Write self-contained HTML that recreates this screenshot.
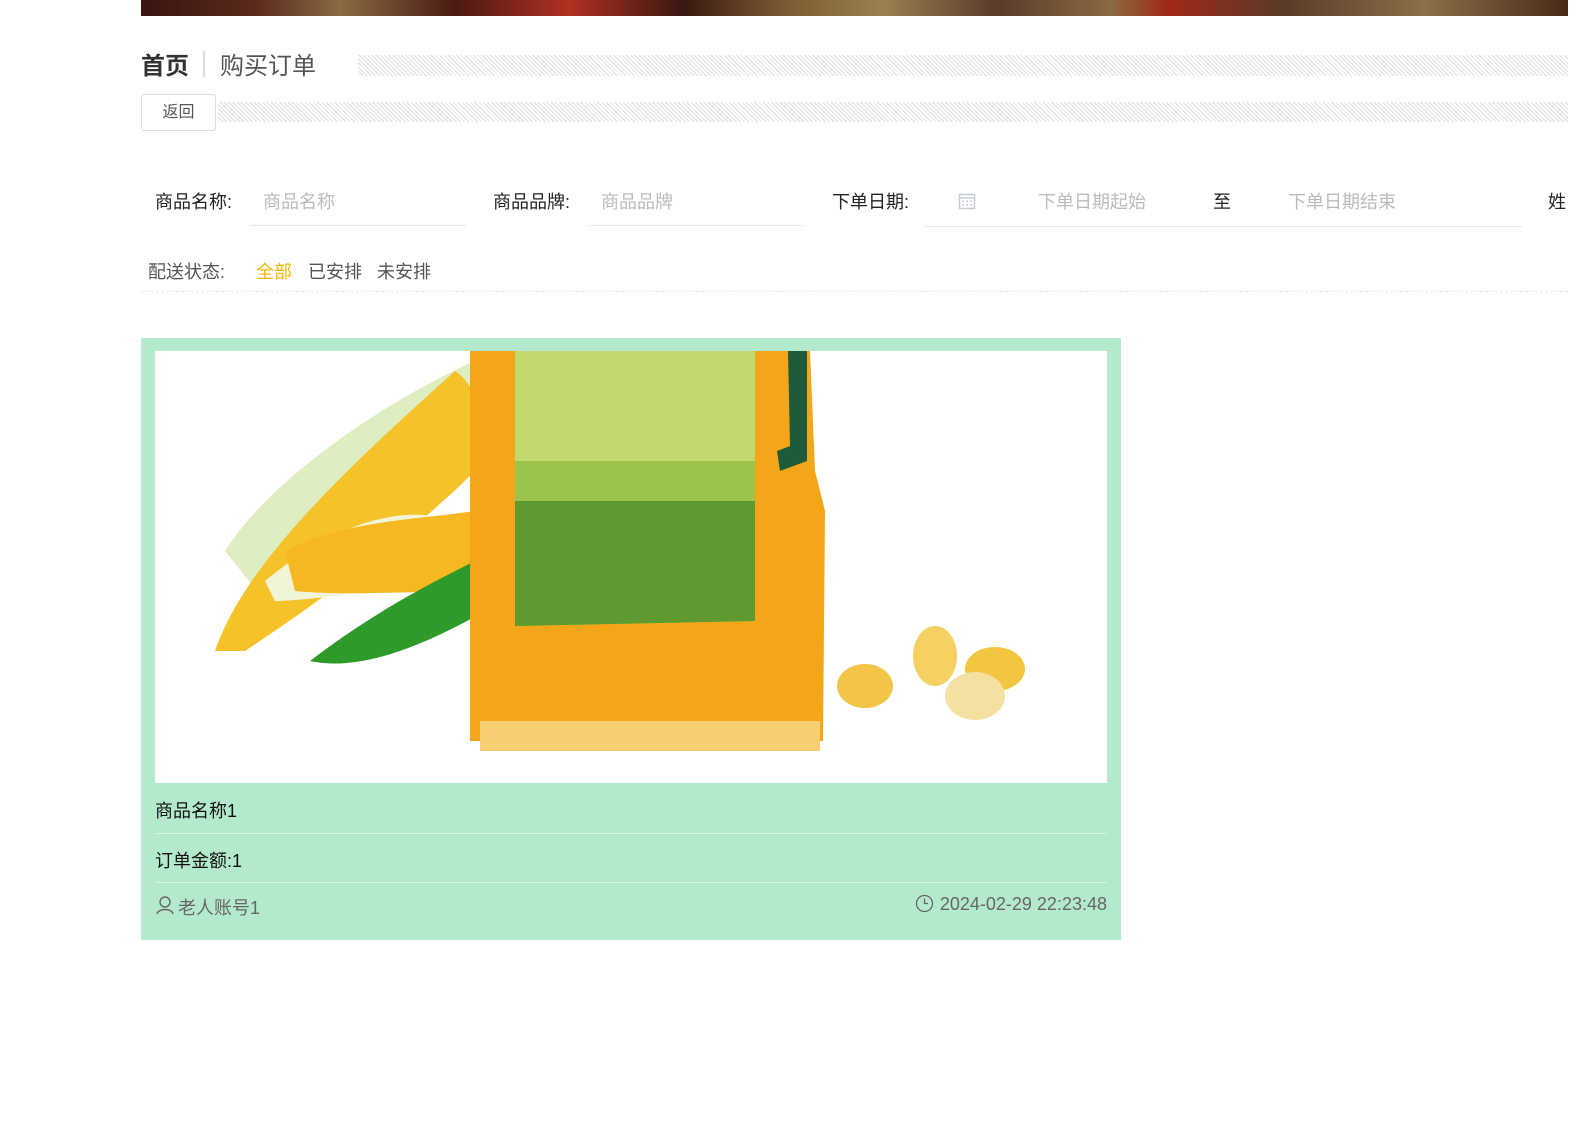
<!DOCTYPE html>
<html><head><meta charset="utf-8"><style>
*{margin:0;padding:0;box-sizing:border-box}
body{width:1592px;height:1128px;background:#fff;font-family:"Liberation Sans","Noto Sans CJK SC",sans-serif;position:relative;overflow:hidden}
.abs{position:absolute}
.banner{left:141px;top:0;width:1427px;height:16px;background:linear-gradient(90deg,#3a1410 0%,#5a2a1c 8%,#8a6a40 14%,#4a1a14 22%,#b03020 30%,#3a1812 38%,#7a5a30 45%,#9a8050 52%,#5a3a2a 60%,#8a6a40 68%,#a02818 72%,#5a3a28 80%,#8a7048 90%,#4a2818 100%)}
.hatch{background:repeating-linear-gradient(45deg,#ddd 0 1px,#fff 1px 3px)}
.lbl{font-size:18px;color:#222}
.ph{font-size:18px;color:#bbb}
.uline{height:1px;background:#e8e8e8}
</style></head><body>
<div class="abs banner"></div>
<div class="abs" style="left:141px;top:46px;font-size:24px;font-weight:bold;color:#333">首页</div>
<div class="abs" style="left:203px;top:51px;width:2px;height:26px;background:#ddd"></div>
<div class="abs" style="left:220px;top:46px;font-size:24px;color:#555">购买订单</div>
<div class="abs hatch" style="left:358px;top:55px;width:1210px;height:21px"></div>
<div class="abs" style="left:141px;top:94px;width:75px;height:37px;border:1px solid #ddd;border-radius:3px;font-size:16px;color:#555;text-align:center;line-height:35px">返回</div>
<div class="abs hatch" style="left:218px;top:102px;width:1350px;height:20px"></div>

<div class="abs lbl" style="left:155px;top:188px">商品名称:</div>
<div class="abs ph" style="left:263px;top:188px">商品名称</div>
<div class="abs uline" style="left:250px;top:225px;width:216px"></div>
<div class="abs lbl" style="left:493px;top:188px">商品品牌:</div>
<div class="abs ph" style="left:601px;top:188px">商品品牌</div>
<div class="abs uline" style="left:588px;top:225px;width:216px"></div>
<div class="abs lbl" style="left:832px;top:188px">下单日期:</div>
<svg class="abs" style="left:958px;top:192px" width="18" height="18" viewBox="0 0 18 18"><rect x="1.5" y="2.5" width="15" height="14" fill="none" stroke="#c8ccd4" stroke-width="1.5"/><line x1="1.5" y1="6" x2="16.5" y2="6" stroke="#c8ccd4" stroke-width="1.5"/><g fill="#c8ccd4"><rect x="4" y="8.5" width="2" height="1.5"/><rect x="8" y="8.5" width="2" height="1.5"/><rect x="12" y="8.5" width="2" height="1.5"/><rect x="4" y="12" width="2" height="1.5"/><rect x="8" y="12" width="2" height="1.5"/><rect x="12" y="12" width="2" height="1.5"/></g></svg>
<div class="abs ph" style="left:1038px;top:188px">下单日期起始</div>
<div class="abs lbl" style="left:1213px;top:188px">至</div>
<div class="abs ph" style="left:1288px;top:188px">下单日期结束</div>
<div class="abs uline" style="left:925px;top:226px;width:597px"></div>
<div class="abs lbl" style="left:1548px;top:188px">姓</div>

<div class="abs" style="left:148px;top:258px;font-size:18px;color:#555">配送状态:</div>
<div class="abs" style="left:256px;top:258px;font-size:18px;color:#f5b400">全部</div>
<div class="abs" style="left:308px;top:258px;font-size:18px;color:#555">已安排</div>
<div class="abs" style="left:377px;top:258px;font-size:18px;color:#555">未安排</div>
<div class="abs" style="left:141px;top:291px;width:1427px;border-top:1px dashed #e8e8e8"></div>

<div class="abs" style="left:141px;top:338px;width:980px;height:602px;background:#b3eacb"></div>
<svg class="abs" style="left:155px;top:351px" width="952" height="432" viewBox="0 0 952 432">
<rect width="952" height="432" fill="#fff"/>
<path d="M70 200 C120 120 250 40 320 10 L340 60 C270 120 170 210 110 250 Z" fill="#dfeec0"/>
<path d="M60 300 C90 210 200 110 300 20 C330 40 330 90 320 120 C250 190 150 260 90 300 Z" fill="#f6c22a"/>
<path d="M110 230 C170 180 240 150 300 170 L290 230 C220 240 150 250 120 250 Z" fill="#f2f4d8"/>
<path d="M130 200 C190 170 250 170 320 160 L330 240 C260 240 190 245 140 240 Z" fill="#f5b820"/>
<path d="M155 310 C220 260 280 230 320 210 L330 260 C260 300 200 320 155 310 Z" fill="#2e9a2a"/>
<path d="M315 0 L655 0 L660 120 L670 160 L668 390 L315 390 Z" fill="#f4a61a"/>
<path d="M360 0 L600 0 L600 270 L360 275 Z" fill="#9cc44a"/>
<path d="M360 0 L600 0 L600 110 L360 110 Z" fill="#c4d870"/>
<path d="M360 150 L600 150 L600 270 L360 275 Z" fill="#5f9a30"/>
<path d="M633 0 L652 0 L652 110 L625 120 L622 100 L635 95 Z" fill="#1f5a3a"/>
<rect x="325" y="370" width="340" height="30" fill="#f7cf70"/>
<ellipse cx="710" cy="335" rx="28" ry="22" fill="#f2c448"/>
<ellipse cx="780" cy="305" rx="22" ry="30" fill="#f6d060"/>
<ellipse cx="840" cy="318" rx="30" ry="22" fill="#f3c640"/>
<ellipse cx="820" cy="345" rx="30" ry="24" fill="#f4e0a0"/>
</svg>
<div class="abs" style="left:155px;top:797px;font-size:18px;color:#111">商品名称1</div>
<div class="abs" style="left:155px;top:833px;width:952px;height:1px;background:#d8f5e4"></div>
<div class="abs" style="left:155px;top:847px;font-size:18px;color:#111">订单金额:1</div>
<div class="abs" style="left:155px;top:882px;width:952px;height:1px;background:#d8f5e4"></div>
<svg class="abs" style="left:155px;top:895px" width="20" height="20" viewBox="0 0 20 20"><circle cx="10" cy="7" r="5" fill="none" stroke="#666" stroke-width="1.4"/><path d="M2 19 C3 13 17 13 18 19" fill="none" stroke="#666" stroke-width="1.4"/></svg>
<div class="abs" style="left:178px;top:894px;font-size:18px;color:#666">老人账号1</div>
<div class="abs" style="left:700px;top:894px;width:407px;text-align:right;font-size:18px;color:#666;white-space:nowrap"><svg style="vertical-align:-3px;margin-right:6px" width="19" height="19" viewBox="0 0 19 19"><circle cx="9.5" cy="9.5" r="8" fill="none" stroke="#666" stroke-width="1.3"/><path d="M9.5 4.5 V9.5 H13" fill="none" stroke="#666" stroke-width="1.3"/></svg>2024-02-29 22:23:48</div>
</body></html>
